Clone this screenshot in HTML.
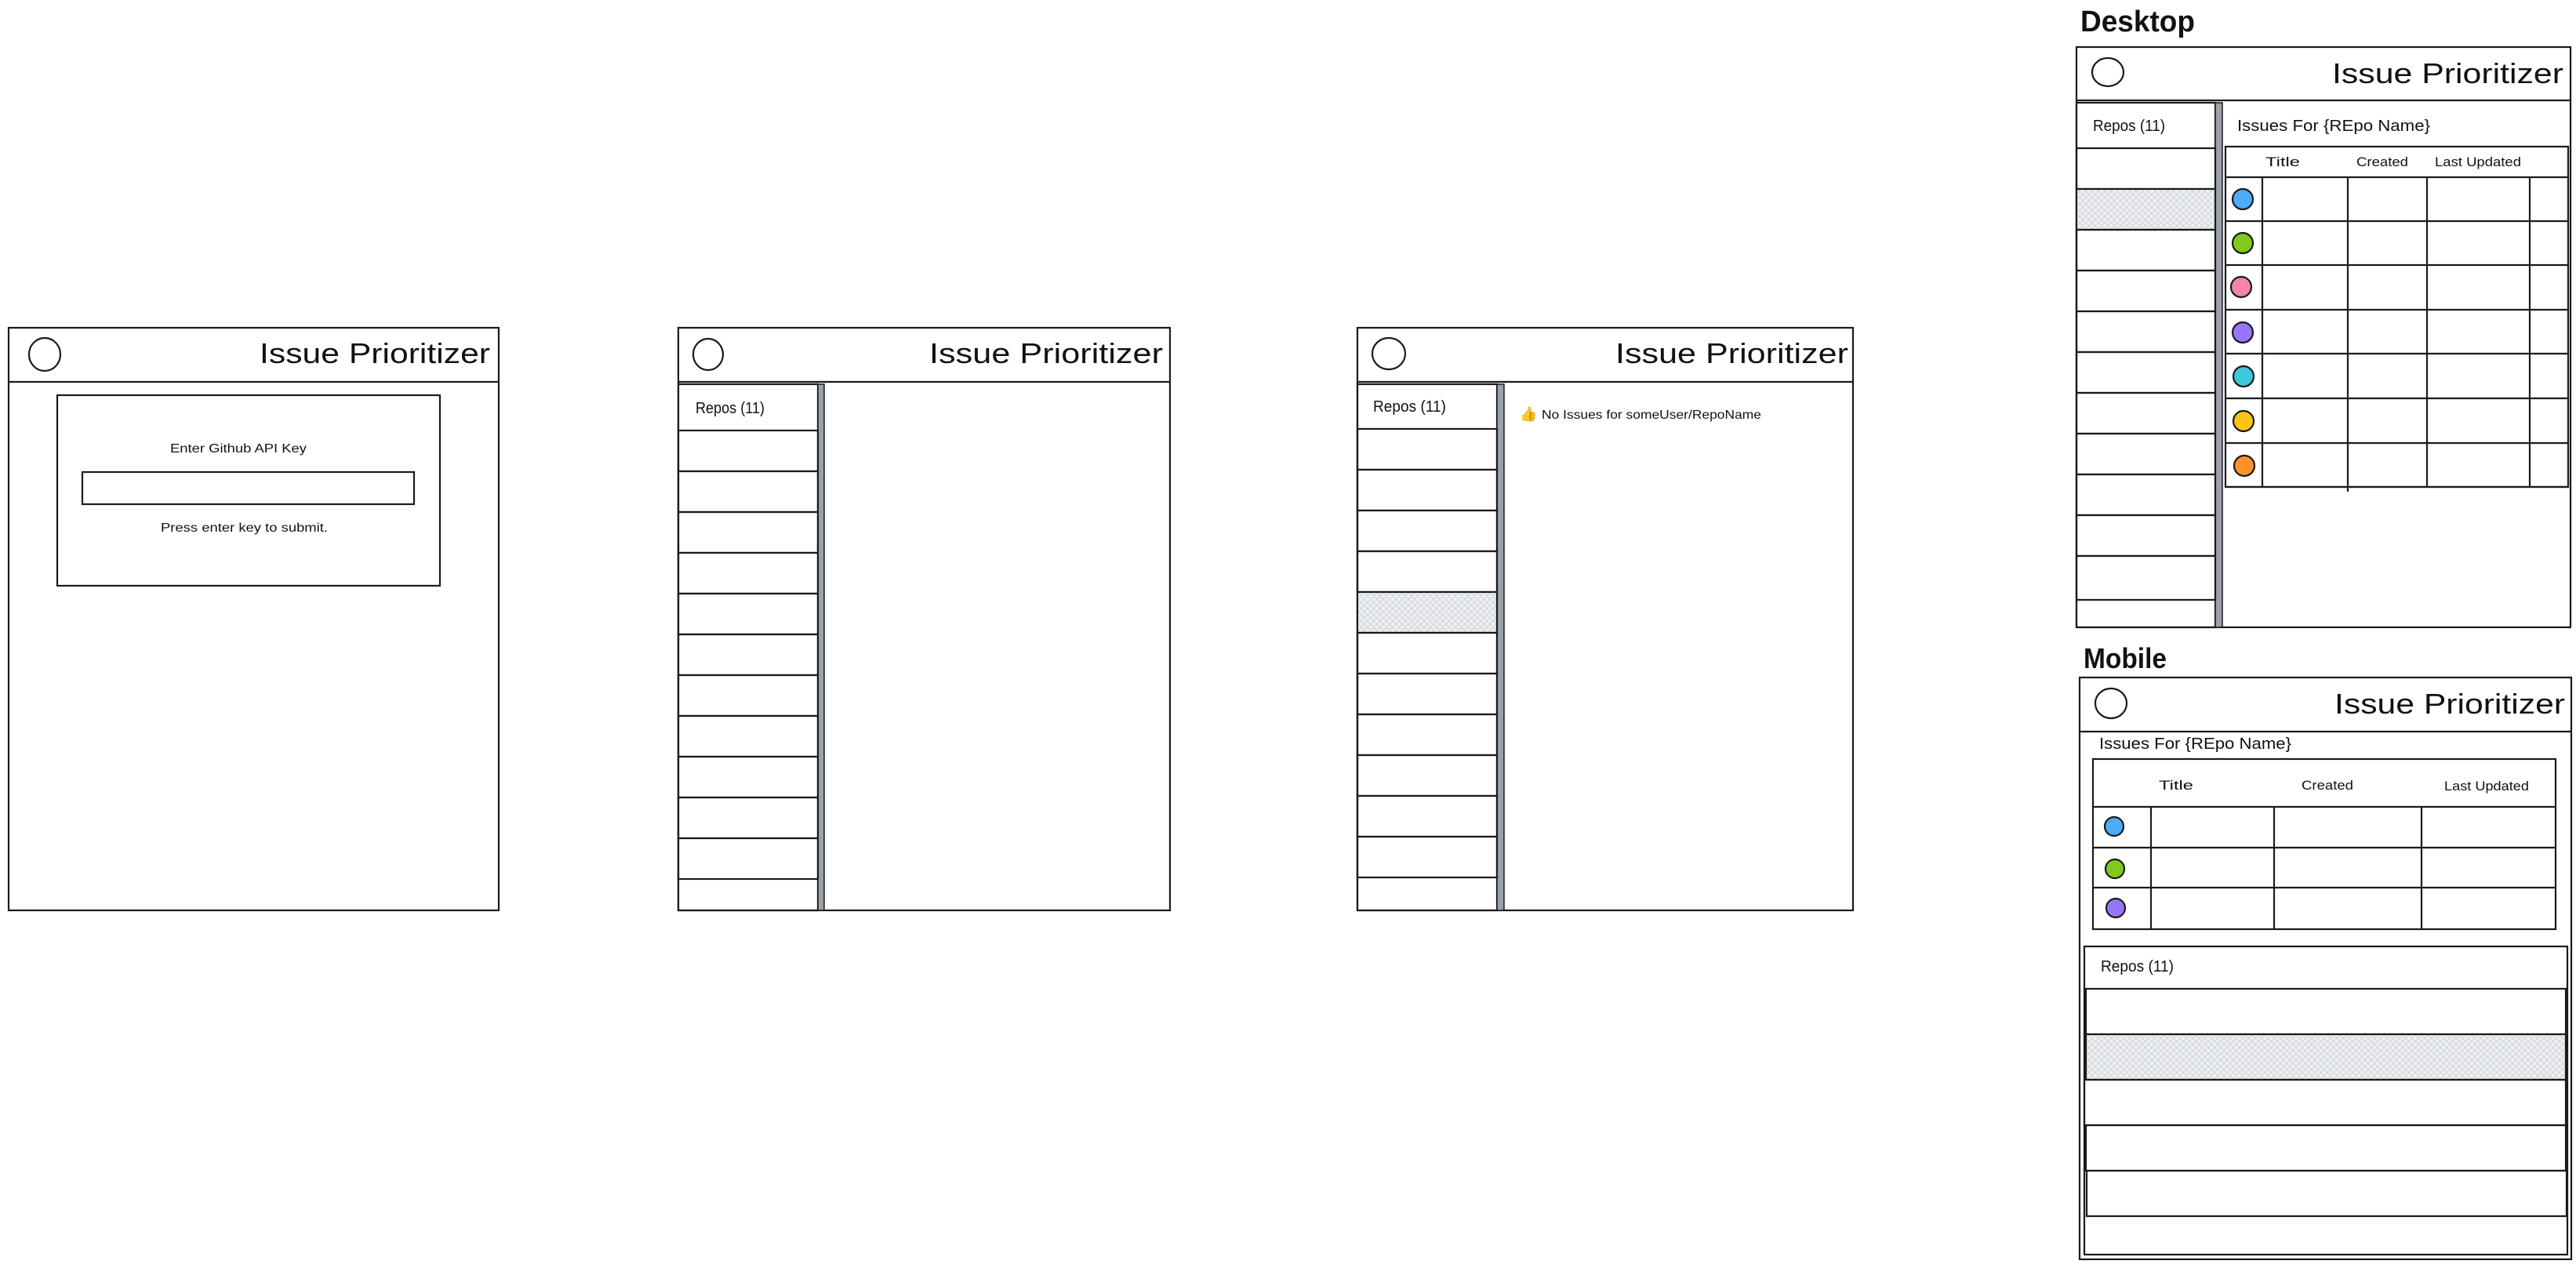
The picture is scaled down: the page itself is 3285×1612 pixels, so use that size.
<!DOCTYPE html>
<html><head><meta charset="utf-8"><style>
html,body{margin:0;padding:0;background:#fff;width:3285px;height:1612px;overflow:hidden}
svg{display:block}
text{font-family:"Liberation Sans",sans-serif;fill:#111}
</style></head><body>
<svg width="3285" height="1612" viewBox="0 0 3285 1612" xmlns="http://www.w3.org/2000/svg">
<defs>
<pattern id="h" width="8" height="8" patternUnits="userSpaceOnUse">
<rect width="8" height="8" fill="#eef0f3"/>
<path d="M0 0L8 8M8 0L0 8" stroke="#cfd4da" stroke-width="1"/>
</pattern>
</defs>
<g fill="none" stroke="#1a1a1a" stroke-width="2.2">
<rect x="11" y="418" width="625" height="743"/>
<line x1="11" y1="487" x2="636" y2="487"/>
<ellipse cx="57" cy="452" rx="20" ry="21"/>
<rect x="73" y="504" width="488" height="243"/>
<rect x="105" y="602" width="423" height="41"/>

<rect x="865" y="418" width="627" height="743"/>
<line x1="865" y1="487" x2="1492" y2="487"/>
<ellipse cx="903" cy="452" rx="19" ry="20"/>
<rect x="865" y="490" width="178" height="671"/>
<rect x="1043" y="490" width="8" height="671" fill="#9aa1a9" stroke-width="1.5"/>
<rect x="865" y="549" width="178" height="52"/>
<rect x="865" y="601" width="178" height="52"/>
<rect x="865" y="653" width="178" height="52"/>
<rect x="865" y="705" width="178" height="52"/>
<rect x="865" y="757" width="178" height="52"/>
<rect x="865" y="809" width="178" height="52"/>
<rect x="865" y="861" width="178" height="52"/>
<rect x="865" y="913" width="178" height="52"/>
<rect x="865" y="965" width="178" height="52"/>
<rect x="865" y="1017" width="178" height="52"/>
<rect x="865" y="1069" width="178" height="52"/>

<rect x="1731" y="418" width="632" height="743"/>
<line x1="1731" y1="487" x2="2363" y2="487"/>
<ellipse cx="1771" cy="451" rx="21" ry="20"/>
<rect x="1731" y="490" width="178" height="671"/>
<rect x="1909" y="490" width="9" height="671" fill="#9aa1a9" stroke-width="1.5"/>
<rect x="1731" y="547" width="178" height="52"/>
<rect x="1731" y="599" width="178" height="52"/>
<rect x="1731" y="651" width="178" height="52"/>
<rect x="1731" y="703" width="178" height="52"/>
<rect x="1731" y="755" width="178" height="52" fill="url(#h)"/>
<rect x="1731" y="807" width="178" height="52"/>
<rect x="1731" y="859" width="178" height="52"/>
<rect x="1731" y="911" width="178" height="52"/>
<rect x="1731" y="963" width="178" height="52"/>
<rect x="1731" y="1015" width="178" height="52"/>
<rect x="1731" y="1067" width="178" height="52"/>

<rect x="2648" y="60" width="630" height="740"/>
<line x1="2648" y1="128" x2="3278" y2="128"/>
<ellipse cx="2688" cy="92" rx="20" ry="18"/>
<rect x="2648" y="131" width="177" height="669"/>
<rect x="2825" y="131" width="9" height="669" fill="#9aa1a9" stroke-width="1.5"/>
<rect x="2648" y="189" width="177" height="52"/>
<rect x="2648" y="241" width="177" height="52" fill="url(#h)"/>
<rect x="2648" y="293" width="177" height="52"/>
<rect x="2648" y="345" width="177" height="52"/>
<rect x="2648" y="397" width="177" height="52"/>
<rect x="2648" y="449" width="177" height="52"/>
<rect x="2648" y="501" width="177" height="52"/>
<rect x="2648" y="553" width="177" height="52"/>
<rect x="2648" y="605" width="177" height="52"/>
<rect x="2648" y="657" width="177" height="52"/>
<rect x="2648" y="709" width="177" height="56"/>
<rect x="2838" y="187" width="437" height="434"/>
<line x1="2838" y1="226" x2="3275" y2="226"/>
<line x1="2838" y1="282" x2="3275" y2="282"/>
<line x1="2838" y1="338" x2="3275" y2="338"/>
<line x1="2838" y1="395" x2="3275" y2="395"/>
<line x1="2838" y1="451" x2="3275" y2="451"/>
<line x1="2838" y1="508" x2="3275" y2="508"/>
<line x1="2838" y1="565" x2="3275" y2="565"/>
<line x1="2838" y1="621" x2="3275" y2="621"/>
<line x1="2885" y1="226" x2="2885" y2="621"/>
<line x1="2994" y1="226" x2="2994" y2="627"/>
<line x1="3095" y1="226" x2="3095" y2="621"/>
<line x1="3226" y1="226" x2="3226" y2="621"/>
<circle cx="2860" cy="254" r="13" fill="#4dabf7"/>
<circle cx="2860" cy="310" r="13" fill="#82c91e"/>
<circle cx="2858" cy="366" r="13" fill="#f783ac"/>
<circle cx="2860" cy="424" r="13" fill="#9775fa"/>
<circle cx="2861" cy="480" r="13" fill="#3bc9db"/>
<circle cx="2861" cy="537" r="13" fill="#fcc419"/>
<circle cx="2862" cy="594" r="13" fill="#ff922b"/>

<rect x="2652" y="864" width="627" height="742"/>
<line x1="2652" y1="933" x2="3279" y2="933"/>
<ellipse cx="2692" cy="897" rx="20" ry="19"/>
<rect x="2669" y="968" width="590" height="217"/>
<line x1="2669" y1="1029" x2="3259" y2="1029"/>
<line x1="2669" y1="1081" x2="3259" y2="1081"/>
<line x1="2669" y1="1132" x2="3259" y2="1132"/>
<line x1="2743" y1="1029" x2="2743" y2="1185"/>
<line x1="2900" y1="1029" x2="2900" y2="1185"/>
<line x1="3088" y1="1029" x2="3088" y2="1185"/>
<circle cx="2696" cy="1054" r="12" fill="#4dabf7"/>
<circle cx="2697" cy="1108" r="12" fill="#82c91e"/>
<circle cx="2698" cy="1158" r="12" fill="#9775fa"/>
<rect x="2658" y="1207" width="616" height="393"/>
<rect x="2660" y="1261" width="612" height="58"/>
<rect x="2660" y="1319" width="612" height="58" fill="url(#h)"/>
<rect x="2658" y="1377" width="614" height="58"/>
<rect x="2660" y="1435" width="612" height="58"/>
<rect x="2661" y="1493" width="612" height="58"/>
</g>

<g font-size="36">
<text x="331" y="463" textLength="294" lengthAdjust="spacingAndGlyphs">Issue Prioritizer</text>
<text x="1185" y="463" textLength="298" lengthAdjust="spacingAndGlyphs">Issue Prioritizer</text>
<text x="2060" y="463" textLength="297" lengthAdjust="spacingAndGlyphs">Issue Prioritizer</text>
<text x="2974" y="106" textLength="295" lengthAdjust="spacingAndGlyphs">Issue Prioritizer</text>
<text x="2977" y="910" textLength="294" lengthAdjust="spacingAndGlyphs">Issue Prioritizer</text>
</g>
<text x="2653" y="40" font-size="38" font-weight="bold" textLength="146" lengthAdjust="spacingAndGlyphs">Desktop</text>
<text x="2657" y="852" font-size="36" font-weight="bold" textLength="106" lengthAdjust="spacingAndGlyphs">Mobile</text>
<g font-size="16">
<text x="217" y="577" textLength="174" lengthAdjust="spacingAndGlyphs">Enter Github API Key</text>
<text x="205" y="678" textLength="213" lengthAdjust="spacingAndGlyphs">Press enter key to submit.</text>
</g>
<g font-size="20">
<text x="887" y="527" textLength="88" lengthAdjust="spacingAndGlyphs">Repos (11)</text>
<text x="1751" y="525" textLength="93" lengthAdjust="spacingAndGlyphs">Repos (11)</text>
<text x="2669" y="167" textLength="92" lengthAdjust="spacingAndGlyphs">Repos (11)</text>
<text x="2679" y="1239" textLength="93" lengthAdjust="spacingAndGlyphs">Repos (11)</text>
<text x="2853" y="167" textLength="246" lengthAdjust="spacingAndGlyphs">Issues For {REpo Name}</text>
<text x="2677" y="955" textLength="245" lengthAdjust="spacingAndGlyphs">Issues For {REpo Name}</text>
</g>
<text x="1938" y="534" font-size="18">👍</text>
<text x="1966" y="534" font-size="16" textLength="280" lengthAdjust="spacingAndGlyphs">No Issues for someUser/RepoName</text>
<g font-size="17">
<text x="2889" y="212" textLength="44" lengthAdjust="spacingAndGlyphs">Title</text>
<text x="3005" y="212" textLength="66" lengthAdjust="spacingAndGlyphs">Created</text>
<text x="3105" y="212" textLength="110" lengthAdjust="spacingAndGlyphs">Last Updated</text>
<text x="2753" y="1007" textLength="44" lengthAdjust="spacingAndGlyphs">Title</text>
<text x="2935" y="1007" textLength="66" lengthAdjust="spacingAndGlyphs">Created</text>
<text x="3117" y="1008" textLength="108" lengthAdjust="spacingAndGlyphs">Last Updated</text>
</g>
</svg>
</body></html>
